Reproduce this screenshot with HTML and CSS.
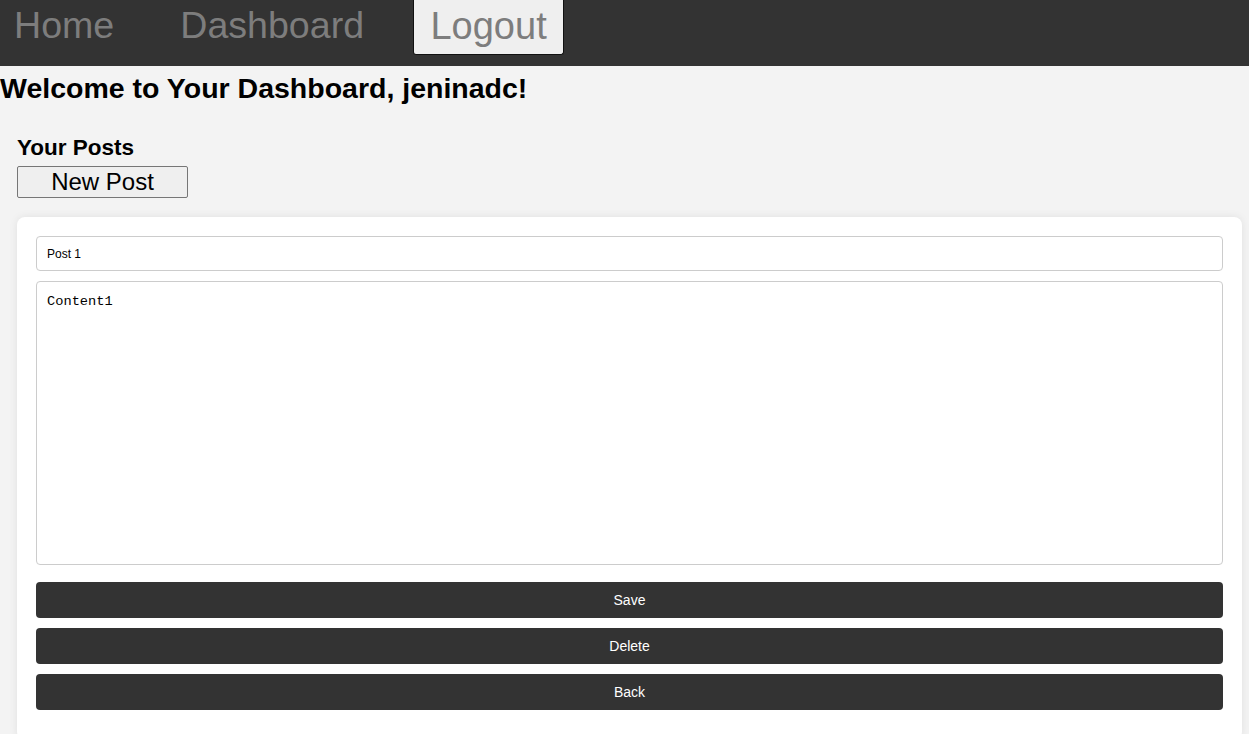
FILE: index.html
```html
<!DOCTYPE html>
<html>
<head>
<meta charset="utf-8">
<link rel="stylesheet" href="styles.css">
</head>
<body>
<nav class="navbar">
  <a class="nav-link" href="#">Home</a>
  <a class="nav-link" href="#">Dashboard</a>
  <button class="nav-logout">Logout</button>
</nav>
<h2 class="welcome">Welcome to Your Dashboard, jeninadc!</h2>
<section class="posts">
  <h3 class="posts-title">Your Posts</h3>
  <button class="new-post">New Post</button>
  <div class="card">
    <input class="title-input" type="text" value="Post 1">
    <textarea class="content-input">Content1</textarea>
    <button class="action">Save</button>
    <button class="action">Delete</button>
    <button class="action">Back</button>
  </div>
</section>
</body>
</html>
```
FILE: styles.css
```css
html, body {
  margin: 0;
  padding: 0;
  background: #f3f3f3;
  font-family: "Liberation Sans", Arial, sans-serif;
  overflow: hidden;
}
.navbar {
  background: #333333;
  height: 66px;
  display: flex;
  align-items: flex-start;
  padding-left: 14px;
  box-sizing: border-box;
}
.nav-link {
  color: #7d7d7d;
  text-decoration: none;
  font-size: 37.6px;
  line-height: 50px;
  margin-right: 66px;
}
.nav-logout {
  margin-left: -17px;
  font-family: "Liberation Sans", Arial, sans-serif;
  font-size: 38px;
  color: #7d7d7d;
  background: #efefef;
  border: 1px solid #111;
  border-top: none;
  border-radius: 0 0 3px 3px;
  height: 55px;
  width: 151px;
  padding: 0 0 2px;
}
.welcome {
  margin: 0;
  padding-top: 7px;
  font-size: 28.5px;
  line-height: 30px;
  color: #000;
}
.posts {
  padding: 0 7px 0 17px;
}
.posts-title {
  margin: 32px 0 0 0;
  font-size: 22.5px;
  line-height: 26px;
}
.new-post {
  display: block;
  font-family: "Liberation Sans", Arial, sans-serif;
  font-size: 24px;
  width: 171px;
  height: 32px;
  padding: 0;
  background: #efefef;
  border: 1px solid #767676;
  border-radius: 2px;
  color: #000;
  margin-top: 5px;
}
.card {
  margin-top: 19px;
  background: #fff;
  border-radius: 8px;
  box-shadow: 0 0 8px rgba(0,0,0,0.08);
  padding: 19px 19px 30px;
  display: flex;
  flex-direction: column;
}
.title-input {
  height: 35px;
  box-sizing: border-box;
  border: 1px solid #cccccc;
  border-radius: 4px;
  padding: 0 10px;
  font-family: "Liberation Sans", Arial, sans-serif;
  font-size: 12px;
  color: #000;
}
.content-input {
  margin-top: 10px;
  height: 284px;
  box-sizing: border-box;
  border: 1px solid #cccccc;
  border-radius: 4px;
  padding: 12px 10px 10px;
  font-family: "Liberation Mono", monospace;
  font-size: 13.7px;
  resize: none;
  color: #000;
}
.action {
  height: 36px;
  background: #333333;
  color: #fff;
  border: none;
  border-radius: 4px;
  font-family: "Liberation Sans", Arial, sans-serif;
  font-size: 14px;
  margin-top: 10px;
}
.content-input + .action {
  margin-top: 17px;
}
```
